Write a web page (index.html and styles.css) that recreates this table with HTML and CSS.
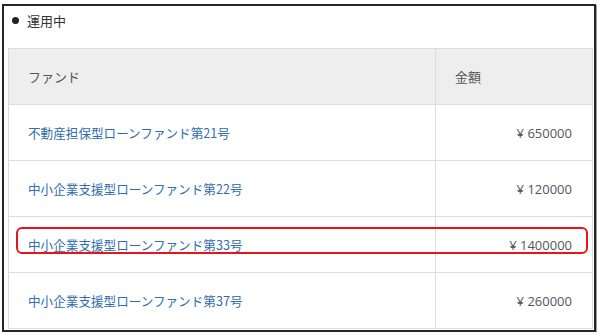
FILE: index.html
```html
<!DOCTYPE html>
<html lang="ja">
<head>
<meta charset="utf-8">
<link rel="stylesheet" href="styles.css">
</head>
<body>
<div class="frame">
  <div class="title"><span class="dot"></span><span>運用中</span></div>
  <table class="funds">
    <thead>
      <tr><th class="name">ファンド</th><th class="amount-h">金額</th></tr>
    </thead>
    <tbody>
      <tr><td class="name"><a href="#">不動産担保型ローンファンド第21号</a></td><td class="amount">¥&nbsp;650000</td></tr>
      <tr><td class="name"><a href="#">中小企業支援型ローンファンド第22号</a></td><td class="amount">¥&nbsp;120000</td></tr>
      <tr><td class="name"><a href="#">中小企業支援型ローンファンド第33号</a></td><td class="amount">¥&nbsp;1400000</td></tr>
      <tr><td class="name"><a href="#">中小企業支援型ローンファンド第37号</a></td><td class="amount">¥&nbsp;260000</td></tr>
    </tbody>
  </table>
  <div class="highlight"></div>
</div>
</body>
</html>
```
FILE: styles.css
```css
* { box-sizing: border-box; }
html, body { margin: 0; padding: 0; background: #fff; }
body {
  font-family: "Noto Sans CJK JP", "Noto Sans", sans-serif;
  font-size: 13px;
  color: #444;
}
.frame {
  position: relative;
  margin: 4px 0 0 2px;
  width: 594px;
  height: 328px;
  border: 2px solid #262626;
  box-shadow: 1px 1px 0 #9a9a9a;
  padding: 0 0 0 4px;
}
.title {
  display: flex;
  align-items: center;
  height: 29px;
  padding-left: 4px;
  margin-bottom: 13px;
  color: #333;
}
.dot {
  width: 7px;
  height: 7px;
  border-radius: 50%;
  background: #222;
  margin-right: 8px;
}
.funds {
  border-collapse: collapse;
  width: 585px;
  table-layout: fixed;
}
.funds th, .funds td {
  border: 1px solid #dcdcdc;
  height: 56px;
  padding: 0 19px;
  font-weight: normal;
  text-align: left;
}
.funds th {
  background: #eeeeee;
  color: #555;
}
.funds th.name, .funds td.name { width: 427px; }
.funds a {
  color: #2f6cb0;
  text-decoration: none;
  font-size: 12.6px;
}
.funds td.amount {
  text-align: right;
  padding-right: 20px;
  color: #555;
  font-family: "Open Sans", "Noto Sans CJK JP", sans-serif;
  font-size: 13px;
}
.highlight {
  position: absolute;
  left: 12px;
  top: 221px;
  width: 572px;
  height: 27px;
  border: 2px solid #e8141b;
  border-radius: 6px;
}
```
